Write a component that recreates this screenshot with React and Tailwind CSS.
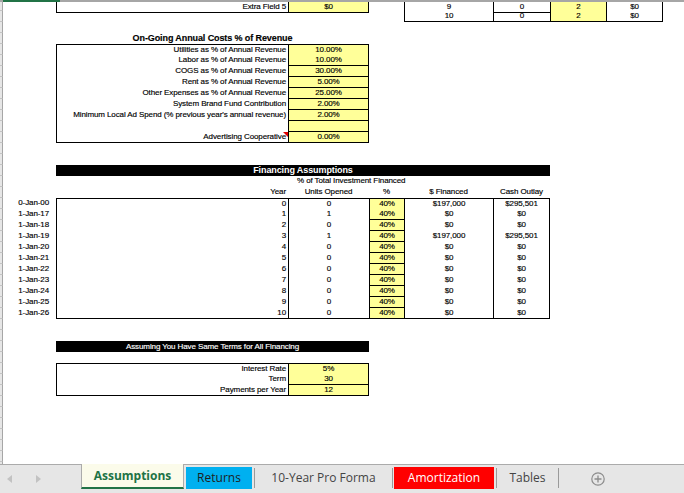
import clsx from "clsx";

const costs = [
  ["Utilities as % of Annual Revenue", "10.00%"],
  ["Labor as % of Annual Revenue", "10.00%"],
  ["COGS as % of Annual Revenue", "30.00%"],
  ["Rent as % of Annual Revenue", "5.00%"],
  ["Other Expenses as % of Annual Revenue", "25.00%"],
  ["System Brand Fund Contribution", "2.00%"],
  ["Minimum Local Ad Spend (% previous year's annual revenue)", "2.00%"],
  ["", ""],
  ["Advertising Cooperative", "0.00%", true],
];

const financing = [
  ["0-Jan-00", 0, 0, "$197,000", "$295,501"],
  ["1-Jan-17", 1, 1, "$0", "$0"],
  ["1-Jan-18", 2, 0, "$0", "$0"],
  ["1-Jan-19", 3, 1, "$197,000", "$295,501"],
  ["1-Jan-20", 4, 0, "$0", "$0"],
  ["1-Jan-21", 5, 0, "$0", "$0"],
  ["1-Jan-22", 6, 0, "$0", "$0"],
  ["1-Jan-23", 7, 0, "$0", "$0"],
  ["1-Jan-24", 8, 0, "$0", "$0"],
  ["1-Jan-25", 9, 0, "$0", "$0"],
  ["1-Jan-26", 10, 0, "$0", "$0"],
];

const terms = [
  ["Interest Rate", "5%"],
  ["Term", "30"],
  ["Payments per Year", "12"],
];

function Row({ short, children }) {
  return (
    <div className={clsx("flex", short ? "h-[9px]" : "h-[11px]")}>
      <div className="w-[3px] shrink-0 bg-[#e6e6e6] border-r border-r-[#a6a6a6] border-b border-b-[#c4c4c4]" />
      <div className="grid flex-1 grid-cols-[53px_232px_81px_35px_89px_57px_56px_57px_1fr]">
        {children}
      </div>
    </div>
  );
}

function Cell({ className, children }) {
  return (
    <div className={clsx("row-start-1 h-full whitespace-nowrap border-black leading-[10px]", className)}>
      {children}
    </div>
  );
}

function Empty({ n }) {
  return Array.from({ length: n }).map((_, i) => <Row key={i} />);
}

function Tabs() {
  return (
    <div className="flex h-[29px] border-t border-[#ababab] bg-[#e6e6e6] font-['Open_Sans',sans-serif] text-[12px] text-[#444]">
      <div className="flex w-[81px] items-center">
        <svg className="ml-[7px]" width="5" height="8" viewBox="0 0 5 8">
          <path d="M5 0 L0 4 L5 8 Z" fill="#c2c2c2" />
        </svg>
        <svg className="ml-[24px]" width="5" height="8" viewBox="0 0 5 8">
          <path d="M0 0 L5 4 L0 8 Z" fill="#c2c2c2" />
        </svg>
      </div>
      <div className="-mt-px flex h-[25px] w-[103px] items-center justify-center border-x border-[#ababab] border-b-2 border-b-[#217346] bg-[#fbfbea] font-bold text-[#217346]">
        Assumptions
      </div>
      <div className="ml-[2px] mt-[2px] flex h-[22px] w-[66px] items-center justify-center bg-[#00b0f0] text-[#1e1e1e]">
        Returns
      </div>
      <div className="ml-[2px] mt-[3px] h-[20px] w-px bg-[#9a9a9a]" />
      <div className="mt-[2px] flex h-[22px] w-[137px] items-center justify-center">10-Year Pro Forma</div>
      <div className="mt-[3px] h-[20px] w-px bg-[#9a9a9a]" />
      <div className="ml-[1px] mt-[2px] flex h-[22px] w-[100px] items-center justify-center bg-[#ff0000] text-white">
        Amortization
      </div>
      <div className="ml-[2px] mt-[3px] h-[20px] w-px bg-[#9a9a9a]" />
      <div className="mt-[2px] flex h-[22px] w-[61px] items-center justify-center">Tables</div>
      <div className="mt-[3px] h-[20px] w-px bg-[#9a9a9a]" />
      <div className="ml-[32px] flex items-center">
        <svg width="14" height="14" viewBox="0 0 14 14">
          <circle cx="7" cy="7" r="6.2" fill="none" stroke="#8c8c8c" strokeWidth="1.2" />
          <path d="M7 3.5 V10.5 M3.5 7 H10.5" stroke="#8c8c8c" strokeWidth="1.3" />
        </svg>
      </div>
    </div>
  );
}

export default function App() {
  return (
    <div className="h-[493px] w-[684px] overflow-hidden bg-white">
      <div className="h-[464px] overflow-hidden font-['Liberation_Sans',Arial,sans-serif] text-[8px] tracking-[-0.1px] text-black [-webkit-text-stroke:0.15px_black]">
        <div className="flex h-[2px]">
          <div className="w-[3px] bg-[#a6a6a6]" />
          <div className="w-[57px] bg-[#217346]" />
          <div className="flex-1 bg-[#a6a6a6]" />
        </div>

        {/* row 0: extra field + tail of units table */}
        <Row short>
          <Cell className="col-start-2 border-l border-b pr-[2px] text-right leading-[8px]">Extra Field 5</Cell>
          <Cell className="col-start-3 border-x border-b bg-[#ffff99] text-center leading-[8px]">$0</Cell>
          <Cell className="col-start-5 border-l text-center leading-[8px]">9</Cell>
          <Cell className="col-start-6 border-l border-b text-center leading-[8px]">0</Cell>
          <Cell className="col-start-7 border-l border-b bg-[#ffff99] text-center leading-[8px]">2</Cell>
          <Cell className="col-start-8 border-x text-center leading-[8px]">$0</Cell>
        </Row>
        <Row>
          <Cell className="col-start-5 border-l border-b text-center">10</Cell>
          <Cell className="col-start-6 border-l border-b text-center">0</Cell>
          <Cell className="col-start-7 border-l border-b bg-[#ffff99] text-center">2</Cell>
          <Cell className="col-start-8 border-x border-b text-center">$0</Cell>
        </Row>
        <Empty n={1} />

        {/* on-going annual costs */}
        <Row>
          <Cell className="col-span-2 col-start-2 text-center text-[9px] font-bold leading-[11px]">
            On-Going Annual Costs % of Revenue
          </Cell>
        </Row>
        {costs.map(([label, value, note], i) => (
          <Row key={i}>
            <Cell
              className={clsx(
                "relative col-start-2 border-l pr-[2px] text-right",
                i === 0 && "border-t",
                i === costs.length - 1 && "border-b"
              )}
            >
              {label}
              {note && (
                <span className="absolute right-0 top-0 h-0 w-0 border-l-[5px] border-t-[5px] border-l-transparent border-t-[#e00000]" />
              )}
            </Cell>
            <Cell className={clsx("col-start-3 border-x border-b bg-[#ffff99] text-center", i === 0 && "border-t")}>
              {value}
            </Cell>
          </Row>
        ))}
        <Empty n={2} />

        {/* financing assumptions */}
        <Row>
          <Cell className="col-span-5 col-start-2 bg-black text-center text-[9px] font-bold leading-[11px] text-white [-webkit-text-stroke:0px]">
            Financing Assumptions
          </Cell>
        </Row>
        <Row>
          <Cell className="col-start-3 overflow-visible pl-[9px]">% of Total Investment Financed</Cell>
        </Row>
        <Row>
          <Cell className="col-start-2 pr-[2px] text-right">Year</Cell>
          <Cell className="col-start-3 text-center">Units Opened</Cell>
          <Cell className="col-start-4 text-center">%</Cell>
          <Cell className="col-start-5 text-center">$ Financed</Cell>
          <Cell className="col-start-6 text-center">Cash Outlay</Cell>
        </Row>
        {financing.map(([date, year, units, fin, out], i) => {
          const top = i === 0 && "border-t";
          const bottom = i === financing.length - 1 && "border-b";
          return (
            <Row key={date}>
              <Cell className="col-start-1 pr-[7px] text-right">{date}</Cell>
              <Cell className={clsx("col-start-2 border-l pr-[2px] text-right", top, bottom)}>{year}</Cell>
              <Cell className={clsx("col-start-3 border-l text-center", top, bottom)}>{units}</Cell>
              <Cell className={clsx("col-start-4 border-l border-b bg-[#ffff99] text-center", top)}>40%</Cell>
              <Cell className={clsx("col-start-5 border-l text-center", top, bottom)}>{fin}</Cell>
              <Cell className={clsx("col-start-6 border-x text-center", top, bottom)}>{out}</Cell>
            </Row>
          );
        })}
        <Empty n={2} />

        {/* financing terms */}
        <Row>
          <Cell className="col-span-2 col-start-2 bg-black text-center leading-[11px] text-white [-webkit-text-stroke:0.15px_white]">
            Assuming You Have Same Terms for All Financing
          </Cell>
        </Row>
        <Empty n={1} />
        {terms.map(([label, value], i) => (
          <Row key={label}>
            <Cell
              className={clsx(
                "col-start-2 border-l pr-[2px] text-right",
                i === 0 && "border-t",
                i === terms.length - 1 && "border-b"
              )}
            >
              {label}
            </Cell>
            <Cell className={clsx("col-start-3 border-x border-b bg-[#ffff99] text-center", i === 0 && "border-t")}>
              {value}
            </Cell>
          </Row>
        ))}
        <Empty n={8} />
      </div>
      <Tabs />
    </div>
  );
}
